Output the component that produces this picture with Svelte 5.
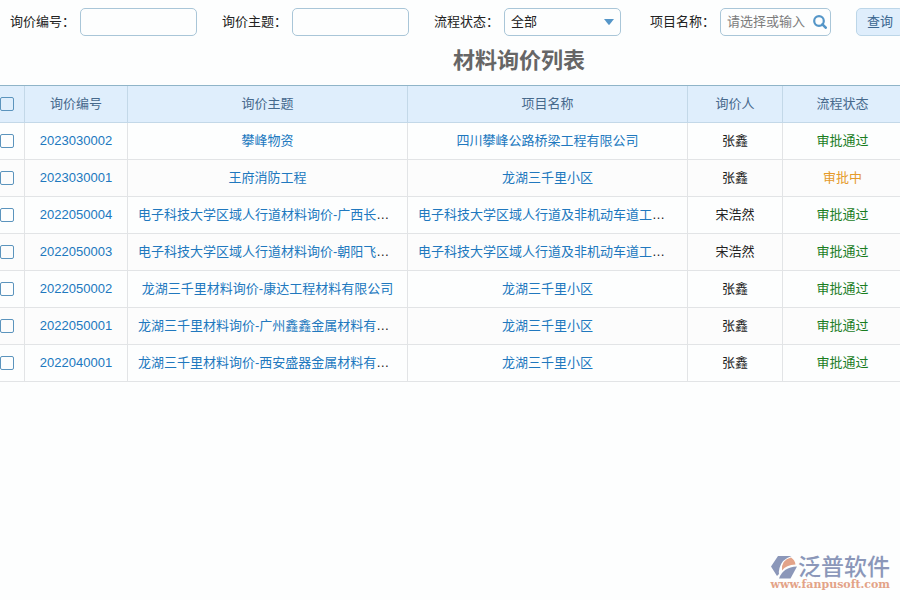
<script>
  let checked = $state({});
  let status = $state('全部');

  const rows = [
    { id: '2023030002', topic: '攀峰物资', project: '四川攀峰公路桥梁工程有限公司', user: '张鑫', state: '审批通过' },
    { id: '2023030001', topic: '王府消防工程', project: '龙湖三千里小区', user: '张鑫', state: '审批中' },
    { id: '2022050004', topic: '电子科技大学区域人行道材料询价-广西长城公司', project: '电子科技大学区域人行道及非机动车道工程项目', user: '宋浩然', state: '审批通过' },
    { id: '2022050003', topic: '电子科技大学区域人行道材料询价-朝阳飞达公司', project: '电子科技大学区域人行道及非机动车道工程项目', user: '宋浩然', state: '审批通过' },
    { id: '2022050002', topic: '龙湖三千里材料询价-康达工程材料有限公司', project: '龙湖三千里小区', user: '张鑫', state: '审批通过' },
    { id: '2022050001', topic: '龙湖三千里材料询价-广州鑫鑫金属材料有限公司', project: '龙湖三千里小区', user: '张鑫', state: '审批通过' },
    { id: '2022040001', topic: '龙湖三千里材料询价-西安盛器金属材料有限公司', project: '龙湖三千里小区', user: '张鑫', state: '审批通过' }
  ];

  function toggleAll(event) {
    for (const row of rows) checked[row.id] = event.currentTarget.checked;
  }
</script>

<div class="page" lang="zh-CN">
  <div class="content">
    <form class="filters" onsubmit={(e) => e.preventDefault()}>
      <div class="field">
        <label for="code">询价编号：</label>
        <input id="code" type="text" />
      </div>
      <div class="field">
        <label for="topic">询价主题：</label>
        <input id="topic" type="text" />
      </div>
      <div class="field wide-gap">
        <label for="status">流程状态：</label>
        <div class="control">
          <select id="status" bind:value={status}>
            <option>全部</option>
            <option>审批通过</option>
            <option>审批中</option>
          </select>
          <svg class="arrow" viewBox="0 0 10 6" width="10" height="6" aria-hidden="true">
            <path d="M0 0H10L5.6 5.6Q5 6.2 4.4 5.6Z" fill="#5596c8" />
          </svg>
        </div>
      </div>
      <div class="field">
        <label for="project">项目名称：</label>
        <div class="control">
          <input id="project" class="search" type="text" placeholder="请选择或输入" />
          <svg class="glass" viewBox="0 0 14 14" width="14" height="14" aria-hidden="true">
            <circle cx="6" cy="6" r="4.8" fill="none" stroke="#5596c8" stroke-width="2.2" />
            <path d="M9.4 9.4L12.700 12.700" stroke="#5596c8" stroke-width="2.6" stroke-linecap="round" />
          </svg>
        </div>
      </div>
      <button type="submit">查询</button>
    </form>

    <h1>材料询价列表</h1>

    <table>
      <colgroup>
        <col class="c-check" />
        <col class="c-id" />
        <col class="c-text" />
        <col class="c-text" />
        <col class="c-user" />
        <col class="c-state" />
        <col />
      </colgroup>
      <thead>
        <tr>
          <th class="check"><input type="checkbox" aria-label="全选" onchange={toggleAll} /></th>
          <th>询价编号</th>
          <th>询价主题</th>
          <th>项目名称</th>
          <th>询价人</th>
          <th>流程状态</th>
          <th></th>
        </tr>
      </thead>
      <tbody>
        {#each rows as row (row.id)}
          <tr>
            <td class="check"><input type="checkbox" aria-label={row.id} bind:checked={checked[row.id]} /></td>
            <td><a href="#{row.id}">{row.id}</a></td>
            <td><a href="#{row.id}">{row.topic}</a></td>
            <td><a href="#{row.id}">{row.project}</a></td>
            <td>{row.user}</td>
            <td class={row.state === '审批中' ? 'pending' : 'passed'}>{row.state}</td>
            <td></td>
          </tr>
        {/each}
      </tbody>
    </table>
  </div>

  <div class="brand">
    <div class="brand-top">
      <svg viewBox="0 0 26 24" width="26" height="24" aria-hidden="true">
        <path d="M7 1H20.500Q11 4 8.500 13Q7.500 17 8 19L6 21L0 11.500Z" fill="#8b97b9" />
        <path d="M11 15.500Q10 5 20 2.500Q24 5 24.500 9.500Q15 10 11 15.500Z" fill="#e3a388" />
        <path d="M8 23.500Q12 12 26 11.500L19.500 23.500Z" fill="#8b97b9" />
      </svg>
      <span>泛普软件</span>
    </div>
    <div class="brand-url">www.fanpusoft.com</div>
  </div>
</div>

<style>
  :global(body) {
    margin: 0;
    background: #fdfefe;
  }

  .page {
    position: relative;
    min-height: 100vh;
    overflow: hidden;
    color: #222;
    font: 13px/20px "Liberation Sans", "Noto Sans CJK SC", sans-serif;
  }

  .content {
    min-width: 1038px;
  }

  .filters {
    display: flex;
    align-items: center;
    gap: 25px;
    padding: 8px 10px 0;
  }

  .field {
    display: flex;
    align-items: center;
    gap: 5px;
  }

  .wide-gap {
    margin-right: 4px;
  }

  label {
    width: 65px;
    font-family: "Noto Sans CJK SC", sans-serif;
    line-height: 26px;
    padding-bottom: 2px;
    white-space: nowrap;
  }

  .control {
    position: relative;
    display: flex;
  }

  .filters input,
  select,
  button {
    box-sizing: border-box;
    height: 28px;
    margin: 0;
    border: 1px solid #a9c6d8;
    border-radius: 5px;
    background: #fdfefe;
    color: #222;
    font: inherit;
  }

  .filters input,
  select {
    width: 117px;
    padding: 0 6px 1px;
  }

  select {
    appearance: none;
  }

  .filters input.search {
    width: 111px;
    padding-bottom: 2px;
    padding-right: 24px;
  }

  input::placeholder {
    color: #7c7c7c;
    opacity: 1;
  }

  .arrow {
    position: absolute;
    right: 7px;
    top: 11px;
    pointer-events: none;
  }

  .glass {
    position: absolute;
    right: 4px;
    top: 7px;
    pointer-events: none;
  }

  button {
    padding: 0 10px 1px;
    border-color: #bcd6e8;
    background: #dfeefc;
    color: #3a6690;
  }

  h1 {
    margin: 0;
    padding: 9px 0 8px;
    color: #666;
    font-size: 22px;
    line-height: 32px;
    font-weight: bold;
    text-align: center;
  }

  table {
    width: 100%;
    table-layout: fixed;
    border-collapse: separate;
    border-spacing: 0;
    border-top: 1px solid #8fb4c8;
  }

  .c-check {
    width: 25px;
  }

  .c-id {
    width: 103px;
  }

  .c-text {
    width: 280px;
  }

  .c-user {
    width: 95px;
  }

  .c-state {
    width: 120px;
  }

  th,
  td {
    box-sizing: border-box;
    height: 37px;
    padding: 0 10px;
    border-right: 1px solid #e2e4e6;
    border-bottom: 1px solid #e2e4e6;
    overflow: hidden;
    text-align: center;
    text-overflow: ellipsis;
    white-space: nowrap;
  }

  th {
    border-color: #c3d8e8;
    background: #dfeefc;
    color: #46698c;
    font-weight: normal;
  }

  tbody tr:nth-child(even) {
    background: #fcfcfc;
  }

  .check {
    padding: 0;
    text-align: left;
  }

  .check input {
    appearance: none;
    display: block;
    box-sizing: border-box;
    width: 14px;
    height: 14px;
    margin: 0;
    border: 1px solid #5b94bd;
    border-radius: 2px;
  }

  .check input:checked {
    background: #5b94bd;
  }

  a {
    color: #2078be;
    text-decoration: none;
  }

  .passed {
    color: #1a7d1f;
  }

  .pending {
    color: #e59a2a;
  }

  .brand {
    position: absolute;
    right: 10px;
    bottom: 9px;
    color: #8b97b9;
  }

  .brand-top {
    display: flex;
    align-items: center;
    justify-content: flex-end;
    gap: 1px;
    font-size: 23px;
    line-height: 24px;
    font-weight: 500;
  }

  .brand-url {
    color: #e3a388;
    font: bold 11px/12px "DejaVu Serif", serif;
    text-align: right;
  }
</style>
